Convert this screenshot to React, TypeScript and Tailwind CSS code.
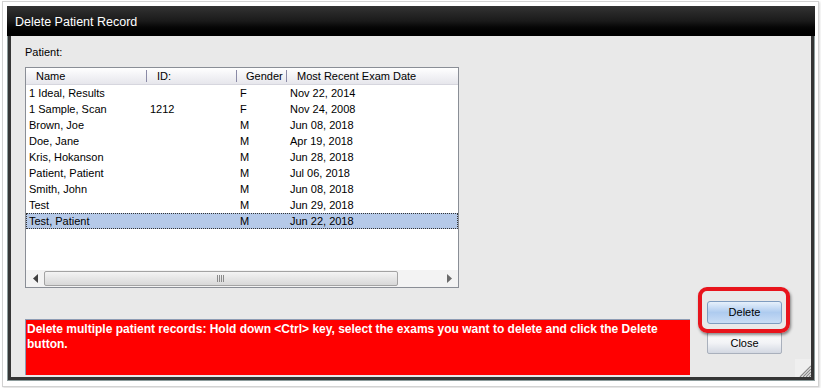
import React from "react";

const rows = [
  { name: "1 Ideal, Results", id: "", g: "F", d: "Nov 22, 2014" },
  { name: "1 Sample, Scan", id: "1212", g: "F", d: "Nov 24, 2008" },
  { name: "Brown, Joe", id: "", g: "M", d: "Jun 08, 2018" },
  { name: "Doe, Jane", id: "", g: "M", d: "Apr 19, 2018" },
  { name: "Kris, Hokanson", id: "", g: "M", d: "Jun 28, 2018" },
  { name: "Patient, Patient", id: "", g: "M", d: "Jul 06, 2018" },
  { name: "Smith, John", id: "", g: "M", d: "Jun 08, 2018" },
  { name: "Test", id: "", g: "M", d: "Jun 29, 2018" },
  { name: "Test, Patient", id: "", g: "M", d: "Jun 22, 2018", sel: true },
];

function Sep() {
  return <div className="w-px h-[12px] bg-[#8a8aa6] self-center" />;
}

export default function App() {
  return (
    <div className="w-[821px] h-[388px] bg-white pt-[1px] pl-[2px] font-['Liberation_Sans',Arial,sans-serif] text-black">
      <div className="w-[817px] h-[386px] border border-[#d2d2d2] bg-white shadow-[1px_1px_2px_rgba(0,0,0,0.15)] pl-[4px] pt-[4px]">
        {/* Dialog */}
        <div className="w-[808px] h-[375px] flex flex-col">
          {/* Title bar */}
          <div className="h-[30px] bg-gradient-to-b from-[#333333] via-[#1a1a1a] to-[#000000] flex items-center pl-[8px] pt-[3px]">
            <span className="text-white text-[12.5px] leading-none">Delete Patient Record</span>
          </div>
          {/* Frame */}
          <div className="flex-1 bg-[#8d9c9c] px-[1px] pb-[1px] flex">
            <div className="flex-1 border-[3px] border-t-0 border-[#353535] bg-[#e9e9e9] relative pl-[14px] pt-[10px] flex flex-col">
              <div className="text-[11px] leading-[13px] mb-[8px]">Patient:</div>
              {/* List box */}
              <div className="w-[434px] h-[221px] border border-[#8a8e96] bg-white flex flex-col">
                {/* Header */}
                <div className="h-[17px] flex bg-gradient-to-b from-[#ffffff] to-[#e6e6ec] border-b border-[#d6d6de] text-[11px] leading-[16px]">
                  <div className="w-[120px] pl-[10px]">Name</div>
                  <Sep />
                  <div className="w-[89px] pl-[10px]">ID:</div>
                  <Sep />
                  <div className="w-[49px] pl-[9px]">Gender</div>
                  <Sep />
                  <div className="flex-1 pl-[10px]">Most Recent Exam Date</div>
                </div>
                {/* Rows */}
                <div className="flex-1 flex flex-col">
                  {rows.map((r) => (
                    <div
                      key={r.name}
                      className={
                        "h-[16px] flex text-[11px] leading-[14px] border border-dotted " +
                        (r.sel ? "bg-[#b5c9e8] border-[#333333]" : "border-transparent")
                      }
                    >
                      <div className="w-[120px] pl-[2px]">{r.name}</div>
                      <div className="w-[90px] pl-[3px]">{r.id}</div>
                      <div className="w-[50px] pl-[3px]">{r.g}</div>
                      <div className="flex-1 pl-[3px]">{r.d}</div>
                    </div>
                  ))}
                </div>
                {/* Horizontal scrollbar */}
                <div className="h-[17px] bg-[#f3f3f3] flex items-center relative">
                  <div className="w-[18px] h-full flex items-center justify-center">
                    <svg width="5" height="9" viewBox="0 0 5 9">
                      <path d="M5 0 L0 4.5 L5 9 Z" fill="#404040" />
                    </svg>
                  </div>
                  <div className="w-[354px] h-[15px] border border-[#a3a3a3] rounded-[2px] bg-gradient-to-b from-[#f4f4f4] to-[#d8d8d8] flex items-center justify-center">
                    <svg width="8" height="7" viewBox="0 0 8 7">
                      <path d="M0.5 0 V7 M2.5 0 V7 M4.5 0 V7 M6.5 0 V7" stroke="#8a8a8a" strokeWidth="1" />
                    </svg>
                  </div>
                  <div className="flex-1 h-full flex items-center justify-end pr-[6px]">
                    <svg width="5" height="9" viewBox="0 0 5 9">
                      <path d="M0 0 L5 4.5 L0 9 Z" fill="#6a6a6a" />
                    </svg>
                  </div>
                </div>
              </div>
              {/* Bottom row */}
              <div className="flex items-start">
                <div className="mt-[31px] w-[665px] h-[56px] bg-[#ff0000] border-t border-l border-[#8e9cb4] pl-[1px] pt-[2px] text-white font-bold text-[12px] leading-[15px]">
                  Delete multiple patient records: Hold down &lt;Ctrl&gt; key, select the exams you want to delete and click the Delete
                  <br />
                  button.
                </div>
                <div className="ml-[17px] mt-[11px] flex flex-col gap-[8px]">
                  <div className="relative">
                    <div className="absolute left-[-9px] top-[-12px] w-[92px] h-[46px] rounded-[9px] border-[4px] border-[#e8141c] shadow-[1px_2px_3px_rgba(0,0,0,0.45)]" />
                    <button className="w-[75px] h-[23px] rounded-[3px] border border-[#7e9cc0] bg-gradient-to-b from-[#e6f0fb] via-[#aecbef] to-[#c9ddf5] text-[11px] leading-none text-black relative">
                      Delete
                    </button>
                  </div>
                  <button className="w-[75px] h-[22px] rounded-[2px] border border-[#a9b0bc] bg-gradient-to-b from-[#fdfdfd] via-[#f2f3f6] to-[#d3d8e2] text-[11px] leading-none text-black">
                    Close
                  </button>
                </div>
              </div>
              {/* Resize grip */}
              <div className="absolute right-0 bottom-0 w-[16px] h-[18px] bg-[#efefef] flex items-end justify-end">
                <svg width="12" height="12" viewBox="0 0 12 12">
                  <path d="M12 1 L1 12 M12 4 L4 12 M12 7 L7 12 M12 10 L10 12" stroke="#8a8a8a" strokeWidth="1.2" />
                </svg>
              </div>
            </div>
          </div>
        </div>
      </div>
    </div>
  );
}
